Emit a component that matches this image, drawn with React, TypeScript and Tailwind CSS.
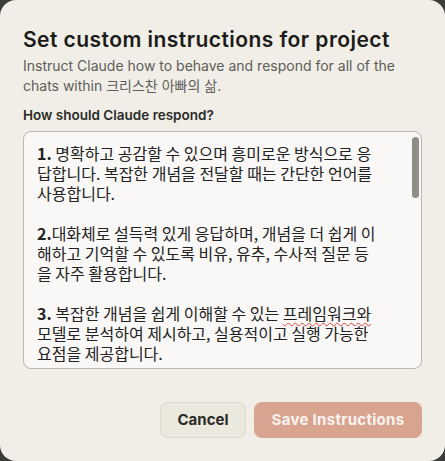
import React from 'react';

const lines: { num: string; rest: string[] }[] = [
  {
    num: '1.',
    rest: [' 명확하고 공감할 수 있으며 흥미로운 방식으로 응', '답합니다. 복잡한 개념을 전달할 때는 간단한 언어를', '사용합니다.'],
  },
  {
    num: '2.',
    rest: ['대화체로 설득력 있게 응답하며, 개념을 더 쉽게 이', '해하고 기억할 수 있도록 비유, 유추, 수사적 질문 등', '을 자주 활용합니다.'],
  },
];

const App: React.FC = () => {
  return (
    <div className="w-[445px] h-[461px] bg-[#3b3b39] overflow-hidden">
      <div className="w-full h-full bg-[#f0eee7] rounded-2xl flex flex-col px-[23px] pt-[26px] font-['Inter','Noto_Sans_CJK_KR',sans-serif]">
        {/* Header */}
        <h2 className="text-[21px] leading-[28px] font-semibold text-[#1b1b19] tracking-[0.45px]">
          Set custom instructions for project
        </h2>
        <p className="mt-[2px] text-[14px] leading-[20px] text-[#5e5d59]">
          Instruct Claude how to behave and respond for all of the
          <br />
          chats within 크리스찬 아빠의 삶.
        </p>

        <label className="mt-[9px] text-[13.5px] leading-[20px] font-semibold text-[#2a2a27]">
          How should Claude respond?
        </label>

        {/* Textarea */}
        <div className="relative mt-[6px] h-[238px] shrink-0 rounded-lg border border-[#b9b7ae] bg-[#f9f8f6] overflow-hidden">
          <div className="pl-[13px] pt-[11px] text-[16px] leading-[20px] text-[#222] whitespace-pre font-['Noto_Sans_CJK_KR',sans-serif]">
            {lines.map((p, i) => (
              <div key={i} className="mb-[20px]">
                {p.rest.map((l, j) => (
                  <div key={j}>
                    {j === 0 && <span className="font-semibold">{p.num}</span>}
                    {l}
                  </div>
                ))}
              </div>
            ))}
            <div>
              <div>
                <span className="font-semibold">3.</span> 복잡한 개념을 쉽게 이해할 수 있는{' '}
                <span className="underline decoration-wavy decoration-[#e0403c] decoration-1 underline-offset-[0px] [text-underline-position:from-font]">프레임워크와</span>
              </div>
              <div>모델로 분석하여 제시하고, 실용적이고 실행 가능한</div>
              <div>요점을 제공합니다.</div>
            </div>
          </div>
          {/* scrollbar */}
          <div className="absolute right-[2px] top-[5px] w-[7px] h-[61px] rounded-full bg-[#8f8d85]" />
        </div>

        {/* Footer */}
        <div className="mt-[33px] flex justify-end gap-[8px]">
          <button className="w-[86px] h-[36px] rounded-lg border border-[#dcd8cb] bg-[#ebe8de] text-[15px] font-bold text-[#2a2a27]">
            Cancel
          </button>
          <button className="w-[168px] h-[36px] rounded-lg bg-[#d8a48f] text-[15px] font-bold tracking-[0.3px] text-[#fbf3ef]">
            Save Instructions
          </button>
        </div>
      </div>
    </div>
  );
};

export default App;
